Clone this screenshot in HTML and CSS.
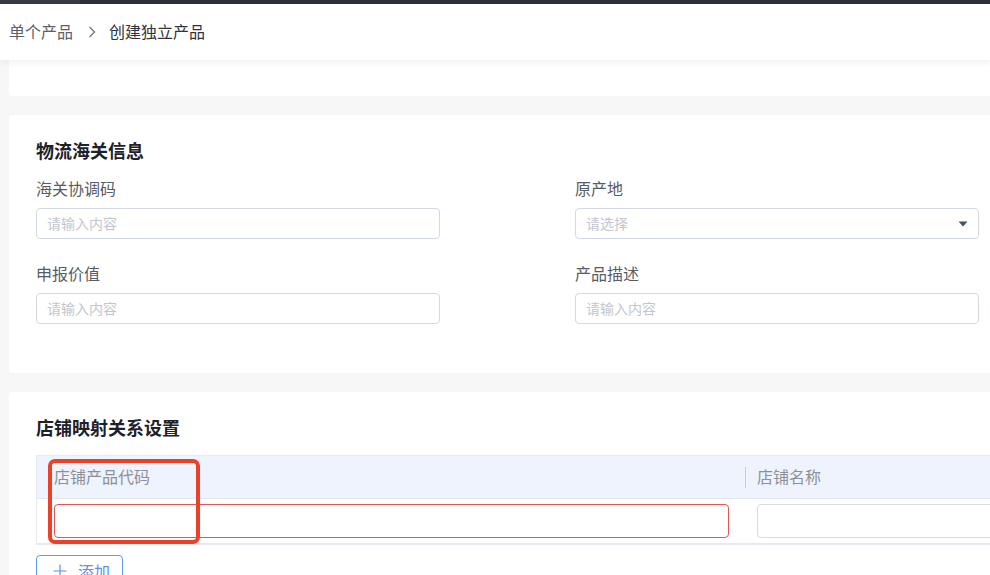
FILE: index.html
```html
<!DOCTYPE html>
<html lang="zh-CN">
<head>
<meta charset="utf-8">
<title>创建独立产品</title>
<link rel="stylesheet" href="styles.css">
</head>
<body>
<div class="topbar"><div class="topbar-tab"></div></div>
<header class="header">
  <span class="crumb">单个产品</span>
  <svg class="crumb-sep" width="10" height="14" viewBox="0 0 10 14"><path d="M2.5 2 L7.5 7 L2.5 12" fill="none" stroke="#707480" stroke-width="1.3"/></svg>
  <span class="crumb crumb-current">创建独立产品</span>
</header>
<main class="main">
  <section class="card card-top"></section>

  <section class="card card-form">
    <h2 class="card-title">物流海关信息</h2>
    <div class="form-grid">
      <div class="form-item">
        <label class="form-label">海关协调码</label>
        <div class="input"><span class="placeholder">请输入内容</span></div>
      </div>
      <div class="form-item">
        <label class="form-label">原产地</label>
        <div class="input select"><span class="placeholder">请选择</span>
          <svg class="caret" width="10" height="6" viewBox="0 0 10 6"><path d="M0.5 0.5 H9.5 L5 5.5 Z" fill="#4b5160"/></svg>
        </div>
      </div>
      <div class="form-item">
        <label class="form-label">申报价值</label>
        <div class="input"><span class="placeholder">请输入内容</span></div>
      </div>
      <div class="form-item">
        <label class="form-label">产品描述</label>
        <div class="input"><span class="placeholder">请输入内容</span></div>
      </div>
    </div>
  </section>

  <section class="card card-table">
    <h2 class="card-title">店铺映射关系设置</h2>
    <div class="table">
      <div class="tr thead">
        <div class="th th-code">店铺产品代码</div>
        <div class="th th-name">店铺名称</div>
      </div>
      <div class="tr tbody">
        <div class="td td-code"><div class="cell-input error"></div></div>
        <div class="td td-name"><div class="cell-input"></div></div>
      </div>
      <div class="annotation"></div>
    </div>
    <button class="btn-add"><svg class="plus" width="14" height="14" viewBox="0 0 14 14"><path d="M7 0.5 V13.5 M0.5 7 H13.5" stroke="#5a93ea" stroke-width="1.2" fill="none"/></svg>添加</button>
  </section>
</main>
</body>
</html>
```
FILE: styles.css
```css
* { box-sizing: border-box; }
html, body { margin: 0; padding: 0; }
body {
  width: 990px;
  height: 575px;
  overflow: hidden;
  background: #f7f7f7;
  font-family: "Noto Sans CJK SC", "Noto Sans", sans-serif;
  color: #303133;
}
.topbar {
  height: 4px;
  background: #2c3039;
  display: flex;
}
.topbar-tab {
  width: 80px;
  background: #353a44;
}
.header {
  position: relative;
  z-index: 2;
  height: 56px;
  background: #fff;
  display: flex;
  align-items: center;
  padding-left: 9px;
  box-shadow: 0 3px 6px rgba(30, 40, 70, 0.06);
}
.crumb {
  font-size: 16px;
  line-height: 20px;
  padding-bottom: 2px;
  color: #5c6068;
}
.crumb-current { color: #30333a; }
.crumb-sep { margin: 0 12px 0 14px; }
.main {
  width: 1160px;
  padding-left: 9px;
}
.card {
  background: #fff;
  border-radius: 4px;
  width: 1132px;
}
.card-top {
  height: 36px;
  border-radius: 0 0 4px 4px;
  margin-bottom: 19px;
}
.card-title {
  margin: 0;
  font-size: 18px;
  line-height: 22px;
  padding-bottom: 2px;
  font-weight: 700;
  color: #1d2129;
}
.card-form {
  padding: 24px 27px 26px;
  height: 258px;
  margin-bottom: 19px;
}
.form-grid {
  margin-top: 15px;
  display: grid;
  grid-template-columns: 539px 539px;
  row-gap: 24px;
}
.form-item {
  display: flex;
  flex-direction: column;
  gap: 8px;
}
.form-label {
  font-size: 16px;
  line-height: 20px;
  padding-bottom: 2px;
  color: #585c64;
}
.input {
  width: 404px;
  height: 31px;
  border: 1px solid #d3d8e6;
  border-radius: 4px;
  display: flex;
  align-items: center;
  padding: 0 10px 2px;
  justify-content: space-between;
}
.placeholder {
  font-size: 14px;
  color: #c3c6ce;
}
.select { padding-bottom: 0; }
.select .placeholder { padding-bottom: 2px; }
.card-table {
  padding: 24px 27px 0;
  height: 400px;
}
.table {
  position: relative;
  margin-top: 15px;
  width: 1078px;
  border: 1px solid #e6e9ef;
  border-right: none;
}
.tr { display: flex; }
.thead {
  height: 43px;
  background: #eef3fd;
  border-bottom: 1px solid #e4e8ef;
}
.th {
  display: flex;
  align-items: center;
  font-size: 16px;
  color: #8d9099;
  position: relative;
  padding-bottom: 2px;
}
.th-code { width: 708px; padding-left: 17px; }
.th-name { flex: 1; padding-left: 12px; }
.th-name::before {
  content: "";
  position: absolute;
  left: 0;
  top: 11px;
  width: 1px;
  height: 21px;
  background: #c9cdd5;
}
.tbody { height: 45px; border-bottom: 1px solid #e6e9ef; }
.td { display: flex; align-items: center; }
.td-code { width: 708px; padding-left: 17px; padding-right: 16px; }
.td-name { flex: 1; padding-left: 12px; }
.cell-input {
  width: 100%;
  height: 34px;
  border: 1px solid #d6dbe7;
  border-radius: 4px;
}
.cell-input.error { border-color: #e25656; }
.annotation {
  position: absolute;
  left: 11px;
  top: 3px;
  width: 152px;
  height: 85px;
  border: 4px solid #ea4128;
  border-radius: 7px;
  pointer-events: none;
}
.btn-add {
  margin-top: 10px;
  width: 87px;
  height: 32px;
  border: 1px solid #5b9bf4;
  border-radius: 4px;
  background: #fff;
  color: #5a93ea;
  font-family: inherit;
  font-size: 16px;
  line-height: 20px;
  display: flex;
  align-items: center;
  padding: 0 0 0 16px;
}
.plus {
  margin-right: 11px;
  flex: none;
}
```
